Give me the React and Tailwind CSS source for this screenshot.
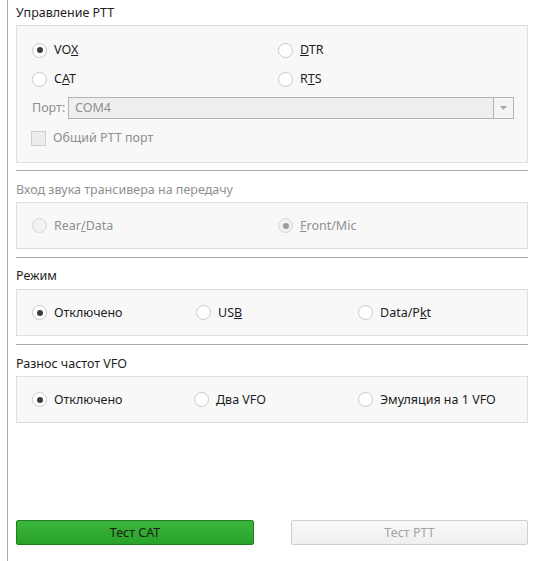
import React from "react";

const Radio = ({ checked, disabled, label, className = "" }) => (
  <div className={`flex items-center h-5 ${className}`}>
    <span
      className={`w-[15px] h-[15px] rounded-full border flex items-center justify-center shrink-0 ${
        disabled ? "border-[#d6d6d6] bg-[#f2f2f2]" : "border-[#c9c9c9] bg-white"
      }`}
    >
      {checked && (
        <span
          className={`w-[6px] h-[6px] rounded-full ${
            disabled ? "bg-[#9a9a9a]" : "bg-[#3c3c3c]"
          }`}
        />
      )}
    </span>
    <span
      className={`ml-[7px] ${disabled ? "text-[#8f8f8f]" : "text-[#1e1e1e]"}`}
    >
      {label}
    </span>
  </div>
);

const Group = ({ children, className = "" }) => (
  <div className={`border border-[#dedede] bg-[#f8f8f8] ${className}`}>
    {children}
  </div>
);

const Sep = () => <div className="h-px bg-[#a9a9a9]" />;

export default function App() {
  return (
    <div
      className="w-[535px] h-[561px] bg-white text-[12.5px] leading-4"
      style={{ fontFamily: '"Noto Sans", "DejaVu Sans", sans-serif' }}
    >
      <div className="ml-[7px] h-full border-l border-[#a9a9a9] pl-[8px] pr-[7px] flex flex-col">
        {/* Управление PTT */}
        <div className="pt-[5px] text-[#1e1e1e]">Управление PTT</div>
        <Group className="mt-[4px] h-[138px] pl-[15px] pr-[13px] pt-[14px]">
          <div className="flex">
            <Radio checked label={<>VO<u>X</u></>} className="w-[246px]" />
            <Radio label={<><u>D</u>TR</>} />
          </div>
          <div className="flex mt-[9px]">
            <Radio label={<>C<u>A</u>T</>} className="w-[246px]" />
            <Radio label={<>R<u>T</u>S</>} />
          </div>
          <div className="flex items-center mt-[8px] h-[22px]">
            <span className="w-[36px] text-[#8f8f8f]">Порт:</span>
            <div className="flex-1 h-[22px] flex border border-[#b4b4b4] bg-[#efefef]">
              <span className="flex-1 pl-[6px] flex items-center text-[#8f8f8f]">COM4</span>
              <span className="w-[20px] border-l border-[#b4b4b4] bg-[#f4f4f4] flex items-center justify-center">
                <svg width="7" height="4" viewBox="0 0 7 4">
                  <path d="M0 0h7L3.5 4z" fill="#a8a8a8" />
                </svg>
              </span>
            </div>
          </div>
          <div className="flex items-center mt-[11px] h-4">
            <span className="ml-[-1px] w-[15px] h-[15px] border border-[#cfcfcf] bg-[#ececec]" />
            <span className="ml-[7px] text-[#8f8f8f]">Общий PTT порт</span>
          </div>
        </Group>
        <div className="mt-[7px]">
          <Sep />
        </div>

        {/* Вход звука */}
        <div className="mt-[11px] text-[#8f8f8f]">Вход звука трансивера на передачу</div>
        <Group className="mt-[4px] h-[47px] pl-[15px] flex items-center">
          <Radio disabled label={<>Rear<u>/</u>Data</>} className="w-[246px]" />
          <Radio disabled checked label={<><u>F</u>ront/Mic</>} />
        </Group>
        <div className="mt-[8px]">
          <Sep />
        </div>

        {/* Режим */}
        <div className="mt-[10px] text-[#1e1e1e]">Режим</div>
        <Group className="mt-[5px] h-[47px] pl-[15px] flex items-center">
          <Radio checked label="Отключено" className="w-[164px]" />
          <Radio label={<>US<u>B</u></>} className="w-[162px]" />
          <Radio label={<>Data/P<u>k</u>t</>} />
        </Group>
        <div className="mt-[8px]">
          <Sep />
        </div>

        {/* Разнос частот VFO */}
        <div className="mt-[11px] text-[#1e1e1e]">Разнос частот VFO</div>
        <Group className="mt-[4px] h-[47px] pl-[15px] flex items-center">
          <Radio checked label="Отключено" className="w-[162px]" />
          <Radio label="Два VFO" className="w-[164px]" />
          <Radio label="Эмуляция на 1 VFO" />
        </Group>

        {/* Кнопки */}
        <div className="mt-auto mb-[16px] flex justify-between">
          <button className="w-[238px] h-[25px] rounded-[2px] border border-[#1f7f1f] bg-gradient-to-b from-[#3bb53b] to-[#28a128] text-[#1a1a1a] text-[12.5px]">
            Тест CAT
          </button>
          <button className="w-[237px] h-[25px] rounded-[2px] border border-[#cfcfcf] bg-gradient-to-b from-[#f9f9f9] to-[#efefef] text-[#a3a3a3] text-[12.5px]">
            Тест PTT
          </button>
        </div>
      </div>
    </div>
  );
}
